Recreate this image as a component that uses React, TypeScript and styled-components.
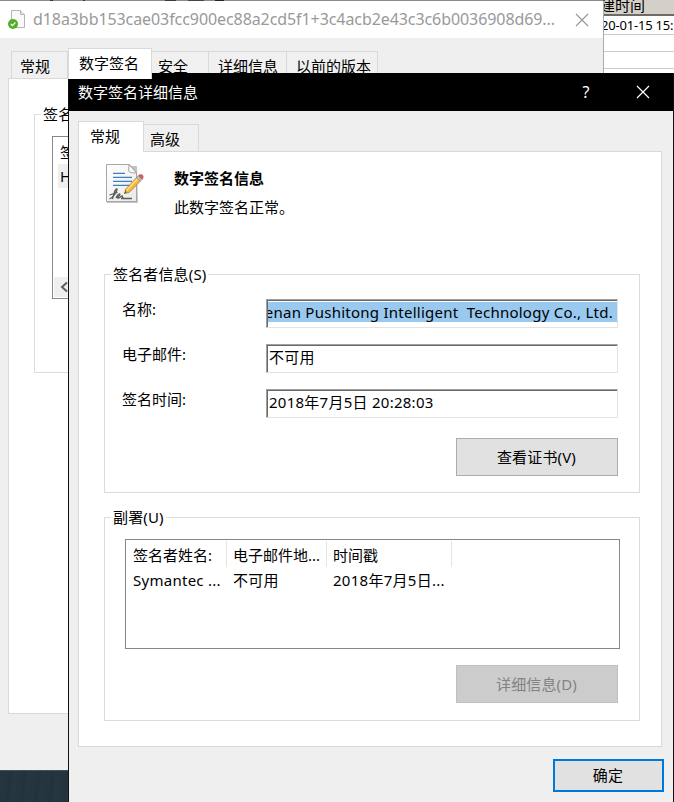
import React from 'react';
import styled, { createGlobalStyle, css } from 'styled-components';

const Global = createGlobalStyle`
  * { box-sizing: border-box; }
  html, body { margin: 0; padding: 0; overflow: hidden; }
  body {
    font-family: "Noto Sans", "Noto Sans CJK SC", sans-serif;
    font-size: 15px;
    line-height: 20px;
    color: #000;
  }
  button { font: inherit; color: inherit; }
`;

const Desktop = styled.main`
  position: relative;
  width: 674px;
  height: 802px;
  overflow: hidden;
  background: repeating-linear-gradient(97deg, #24353f 0 5px, #23333d 5px 9px, #25363f 9px 14px);
`;

/* ---------- file list behind the windows ---------- */

const FileList = styled.section`
  position: absolute;
  left: 0;
  top: 0;
  width: 674px;
  height: 80px;
  padding-left: 600px;
  background: #fff;
  overflow: hidden;
  white-space: nowrap;
`;

const FileHeader = styled.div`
  height: 16px;
  margin-left: -600px;
  padding-left: 600px;
  background:
    linear-gradient(90deg, #8d8987 0 50px, #3a3838 50px 53px, #8d8987 53px 83px, #3a3838 83px 85px, #8d8987 85px 165px, #3a3838 165px 176px, #8d8987 176px 188px, #444 188px 204px, #8d8987 204px 215px, #222 215px 224px, #8d8987 224px) 0 0 / 603px 1px no-repeat,
    #d4d0c8;
  border-bottom: 2px solid #6e6b66;
  line-height: 10px;
`;

const FileRow = styled.div<{ $first?: boolean }>`
  height: ${p => (p.$first ? 19 : 17)}px;
  padding: ${p => (p.$first ? '2px 0 0 1px' : '0')};
  border-bottom: 1px solid #cfcbc4;
  line-height: 15px;
  font-size: 13px;
  letter-spacing: -0.2px;
`;

/* ---------- window frames ---------- */

const BackWindow = styled.section`
  position: absolute;
  left: 0;
  top: 1px;
  width: 604px;
  height: 769px;
  display: flex;
  flex-direction: column;
  background: #efefef;
  border-right: 1px solid #aaa;
  box-shadow: 0 1px 0 #46504f;
`;

const BackTitle = styled.header`
  display: flex;
  align-items: center;
  height: 37px;
  flex: none;
  padding: 0 14px 0 7px;
  background: #fff;
  color: #999;
`;

const BackTitleText = styled.span`
  flex: 1;
  margin: -2px 0 0 7px;
  white-space: nowrap;
  font-size: 16px;
  letter-spacing: -0.08px;
`;

const FrontWindow = styled.section`
  position: absolute;
  left: 68px;
  top: 73px;
  width: 606px;
  height: 729px;
  display: flex;
  flex-direction: column;
  background: #efefef;
  border: solid #101010;
  border-width: 0 1px;
`;

const FrontTitle = styled.header`
  display: flex;
  align-items: center;
  height: 38px;
  flex: none;
  padding: 0 23px 0 9px;
  background: #000;
  color: #fff;
`;

const FrontTitleText = styled.h1`
  flex: 1;
  margin: 0;
  font: inherit;
`;

const Help = styled.span`
  width: 12px;
  margin-right: 44px;
  text-align: center;
  font-size: 16px;
`;

/* ---------- tabs ---------- */

const Tabs = styled.nav<{ $back?: boolean }>`
  display: flex;
  align-items: flex-end;
  flex: none;
  height: 40px;
  padding-left: ${p => (p.$back ? 11 : 9)}px;
`;

const Tab = styled.div<{ $w: number; $active?: boolean; $pad: number; $first?: boolean }>`
  width: ${p => p.$w}px;
  height: 27px;
  padding: 4px 0 0 ${p => p.$pad}px;
  white-space: nowrap;
  border: 1px solid #d9d9d9;
  border-width: ${p => (p.$first ? '1px 1px 0 1px' : '1px 1px 0 0')};
  background: #f0f0f0;
  ${p =>
    p.$active &&
    css`
      height: 31px;
      margin-bottom: -1px;
      background: #fff;
      border-left-width: 1px;
      z-index: 1;
    `}
`;

const BackPanel = styled.div`
  height: 636px;
  margin-left: 8px;
  padding: 25px 0 0 25px;
  background: #fff;
  border: 1px solid #d9d9d9;
  border-right: 0;
`;

const FrontPanel = styled.div`
  width: 584px;
  height: 596px;
  flex: none;
  margin-left: 9px;
  padding: 0 21px 0 25px;
  background: #fff;
  border: 1px solid #d9d9d9;
`;

/* ---------- grouped content ---------- */

const Group = styled.fieldset<{ $h: number }>`
  height: ${p => p.$h}px;
  min-width: 0;
  margin: 0;
  padding: 0 0 0 6px;
  border: 1px solid #dcdcdc;

  & + & {
    margin-top: 14px;
  }
`;

const Legend = styled.legend`
  padding: 0 2px;
  white-space: nowrap;
  letter-spacing: 0.15px;
`;

const Intro = styled.div`
  display: flex;
  height: 112px;
  padding-top: 11px;
`;

const IntroText = styled.div`
  margin-left: 28px;
  padding-top: 5px;
`;

const IntroHeading = styled.h2`
  margin: 0 0 9px;
  font-size: 15px;
  line-height: 20px;
  font-weight: 700;
`;

const Field = styled.div`
  display: flex;
  height: 29px;
  margin-bottom: 16px;
  padding-left: 11px;
`;

const FieldName = styled.label`
  width: 144px;
`;

const FieldBox = styled.div`
  width: 352px;
  height: 29px;
  padding: 1px 0 0 1px;
  border: 1px solid #e3e3e3;
  border-top-color: #a0a0a0;
  border-left-color: #a0a0a0;
  box-shadow: inset 1px 1px 0 #696969;
  overflow: hidden;
  line-height: 22px;
  white-space: pre;
`;

const FieldValue = styled.div<{ $selected?: boolean }>`
  padding-left: 1px;
  letter-spacing: 0.26px;
  ${p =>
    p.$selected &&
    css`
      display: flex;
      justify-content: flex-end;
      height: 20px;
      margin-top: 1px;
      padding-right: 4px;
      overflow: hidden;
      line-height: 20px;
      background: #99c9ef;
      letter-spacing: 0.25px;
    `}
`;

const ButtonRow = styled.div<{ $gap?: number }>`
  display: flex;
  justify-content: flex-end;
  padding: ${p => p.$gap || 0}px 21px 0 0;
`;

const Button = styled.button<{ $primary?: boolean }>`
  width: ${p => (p.$primary ? 111 : 162)}px;
  height: ${p => (p.$primary ? 33 : 38)}px;
  padding: 0 1px 1px 0;
  border: ${p => (p.$primary ? '2px solid #0078d7' : '1px solid #adadad')};
  border-radius: 0;
  background: #e1e1e1;
  letter-spacing: 0.15px;
  &:disabled {
    color: #838383;
    background: #ccc;
    border-color: #bfbfbf;
  }
`;

const Fields = styled.div`
  padding-top: 15px;
`;

const List = styled.div`
  display: grid;
  grid-template-columns: 100px 100px 125px 1fr;
  grid-template-rows: 27px 24px 1fr;
  width: 495px;
  height: 110px;
  margin: 12px 0 16px 14px;
  padding: 1px 0 0 1px;
  border: 1px solid #828790;
`;

const HeadCell = styled.div`
  height: 26px;
  padding: 4px 0 0 6px;
  border-right: 1px solid #e5e5e5;
  white-space: nowrap;
`;

const Cell = styled.div`
  padding: 2px 0 0 6px;
  white-space: nowrap;
  letter-spacing: 0.27px;
`;

const Footer = styled.footer`
  display: flex;
  justify-content: flex-end;
  padding: 12px 9px 0 0;
`;

const BackList = styled.div`
  display: flex;
  flex-direction: column;
  width: 300px;
  height: 163px;
  margin: 12px 0 0 11px;
  padding: 0 0 1px 1px;
  border: 1px solid #828790;
`;

const BackListHead = styled.div`
  padding: 5px 0 0 6px;
  height: 27px;
`;

const BackListItem = styled.div`
  height: 24px;
  margin-left: 4px;
  padding: 2px 0 0 2px;
  background: #efefef;
`;

const ScrollBar = styled.div`
  display: flex;
  align-items: center;
  height: 20px;
  margin-top: auto;
  padding-left: 5px;
  background: #efefef;
`;

const CloseIcon = ({ color, size }: { color: string; size: number }) => (
  <svg width={size} height={size} viewBox="0 0 14 14" fill="none" stroke={color} strokeWidth="1.2">
    <path d="M1 1 13 13M13 1 1 13" />
  </svg>
);

const FileIcon = () => (
  <svg width="19" height="21" viewBox="0 0 19 21">
    <path d="M4.5 1.5h9l4 4v13h-13z" fill="#fafafa" stroke="#b5b5b5" />
    <path d="M13.5 1.5v4h4" fill="#e8e8e8" stroke="#b5b5b5" />
    <circle cx="6" cy="15" r="5" fill="#55ad24" />
    <path d="m3.8 15 1.6 1.7 3-3.2" fill="none" stroke="#fff" strokeWidth="1.1" />
  </svg>
);

const SignatureIcon = () => (
  <svg width="42" height="42" viewBox="0 0 42 42">
    <defs>
      <linearGradient id="paper" x1="0" y1="0" x2="1" y2="1">
        <stop offset="0" stopColor="#fff" />
        <stop offset="1" stopColor="#e9e9e9" />
      </linearGradient>
    </defs>
    <path d="M3 3h30l1 37H3z" fill="#c4c4c4" />
    <path d="M2.5 1.5h23l7 8v29h-30z" fill="url(#paper)" stroke="#a6a6a6" />
    <path d="M25 1.5 24.6 7q0 2.5 3 2.7l5 .3z" fill="#fafafa" stroke="#a6a6a6" />
    <path d="M9 10.4h12M9 14.4h19M9 18.4h19M9 22.4h17" stroke="#3f80c4" strokeWidth="1.4" />
    <path
      d="M5.5 36c4-1.5 7-7 7.5-9.5.3-1.5-1.5-.5-2.5 2.500s-1.500 5-2 7M5.500 32l8-2.500M12 35c1-3 4-5 4-3.500s-4 3-2 3.500 3-2 4-2 0 2 1.500 1.500M17 35.500h11"
      fill="none"
      stroke="#5c5c5c"
      strokeWidth="1.3"
    />
    <path d="m20 31 1.5-5 3.5 3.4z" fill="#514a43" />
    <path d="m21.2 26.7 11.2-12 4 3.500-11.400 11.500-2.600.3z" fill="#efb83e" stroke="#b77928" strokeWidth=".7" />
    <path d="m22.700 27.200 11-11.500" stroke="#ffe290" strokeWidth="1.3" />
    <path d="m32.300 14.800 2-2 4 3.500-2 2z" fill="#b9c0c5" stroke="#8a8e91" strokeWidth=".6" />
    <path d="m34.300 12.800 1.600-1.200q2-.6 3 1t-.6 3.700z" fill="#d95e60" stroke="#b64a4e" strokeWidth=".5" />
  </svg>
);

const details = [
  { name: '名称:', value: 'Henan Pushitong Intelligent  Technology Co., Ltd.', selected: true },
  { name: '电子邮件:', value: '不可用' },
  { name: '签名时间:', value: '2018年7月5日 20:28:03' },
];

export default function App() {
  return (
    <Desktop>
      <Global />
      <FileList>
        <FileHeader>建时间</FileHeader>
        <FileRow $first>20-01-15 15:</FileRow>
        <FileRow />
        <FileRow />
      </FileList>

      <BackWindow>
        <BackTitle>
          <FileIcon />
          <BackTitleText>d18a3bb153cae03fcc900ec88a2cd5f1+3c4acb2e43c3c6b0036908d69...</BackTitleText>
          <CloseIcon color="#999" size={14} />
        </BackTitle>
        <Tabs $back>
          <Tab $first $w={57} $pad={8}>常规</Tab>
          <Tab $active $w={84} $pad={10}>数字签名</Tab>
          <Tab $w={57} $pad={6}>安全</Tab>
          <Tab $w={78} $pad={9}>详细信息</Tab>
          <Tab $w={91} $pad={9}>以前的版本</Tab>
        </Tabs>
        <BackPanel>
          <Group $h={269}>
            <Legend>签名列表</Legend>
            <BackList>
              <BackListHead>签名者姓名:</BackListHead>
              <BackListItem>Henan</BackListItem>
              <ScrollBar>
                <svg width="10" height="12" viewBox="0 0 10 12" fill="none" stroke="#606060" strokeWidth="2">
                  <path d="M8 1.5 3 6l5 4.5" />
                </svg>
              </ScrollBar>
            </BackList>
          </Group>
        </BackPanel>
      </BackWindow>

      <FrontWindow>
        <FrontTitle>
          <FrontTitleText>数字签名详细信息</FrontTitleText>
          <Help>?</Help>
          <CloseIcon color="#fff" size={14} />
        </FrontTitle>
        <Tabs>
          <Tab $active $w={66} $pad={11}>常规</Tab>
          <Tab $w={55} $pad={6}>高级</Tab>
        </Tabs>
        <FrontPanel>
          <Intro>
            <SignatureIcon />
            <IntroText>
              <IntroHeading>数字签名信息</IntroHeading>
              此数字签名正常。
            </IntroText>
          </Intro>
          <Group $h={229}>
            <Legend>签名者信息(S)</Legend>
            <Fields>
              {details.map(d => (
                <Field key={d.name}>
                  <FieldName>{d.name}</FieldName>
                  <FieldBox>
                    <FieldValue $selected={d.selected}>{d.value}</FieldValue>
                  </FieldBox>
                </Field>
              ))}
            </Fields>
            <ButtonRow $gap={4}>
              <Button>查看证书(V)</Button>
            </ButtonRow>
          </Group>
          <Group $h={214}>
            <Legend>副署(U)</Legend>
            <List>
              <HeadCell>签名者姓名:</HeadCell>
              <HeadCell>电子邮件地...</HeadCell>
              <HeadCell>时间戳</HeadCell>
              <div />
              <Cell>Symantec ...</Cell>
              <Cell>不可用</Cell>
              <Cell>2018年7月5日...</Cell>
            </List>
            <ButtonRow>
              <Button disabled>详细信息(D)</Button>
            </ButtonRow>
          </Group>
        </FrontPanel>
        <Footer>
          <Button $primary>确定</Button>
        </Footer>
      </FrontWindow>
    </Desktop>
  );
}
